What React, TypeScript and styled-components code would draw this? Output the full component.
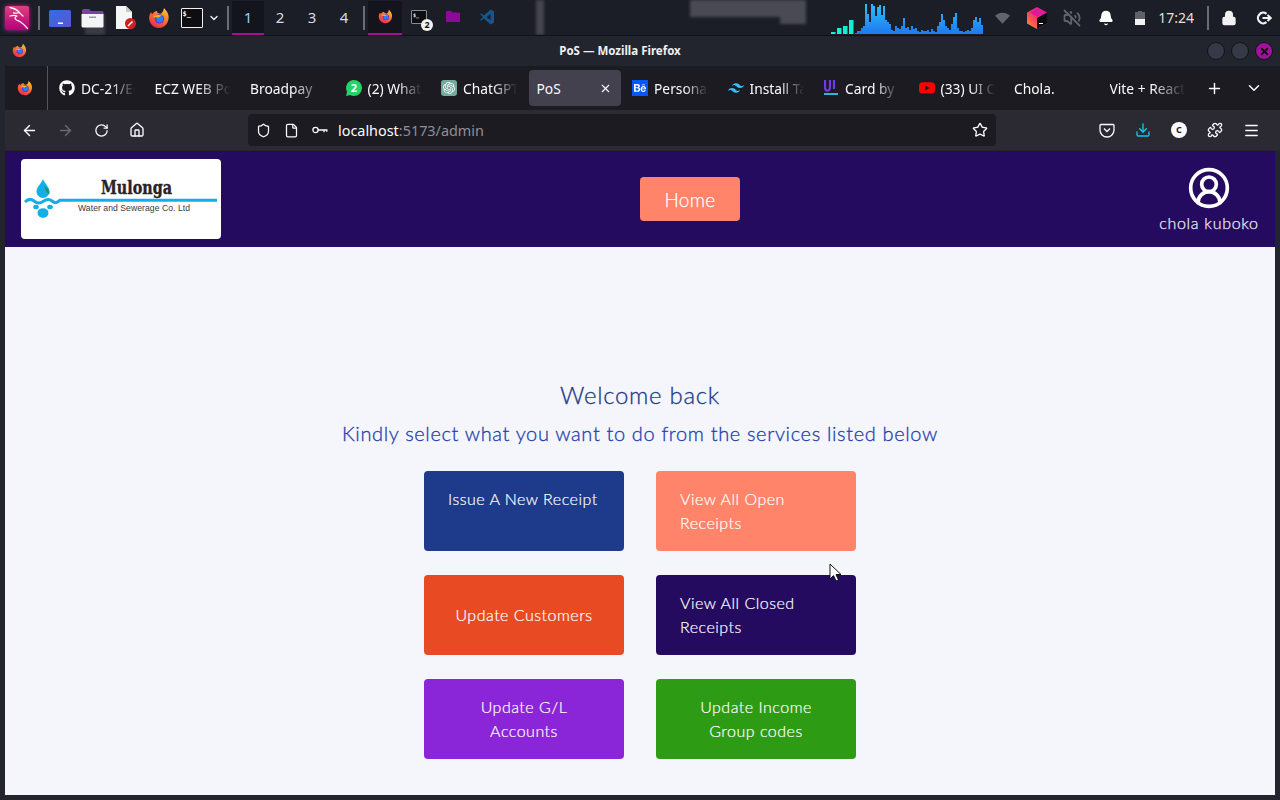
import React from 'react';
import styled, { createGlobalStyle } from 'styled-components';
import {
  ArrowLeft,
  ArrowRight,
  RotateCw,
  House,
  Shield,
  File,
  Star,
  Download,
  Puzzle,
  Menu,
  X,
  Plus,
  ChevronDown,
  Bell,
  Lock,
  VolumeOff,
  CircleUserRound,
} from 'lucide-react';
import { FaGithub } from 'react-icons/fa';
import { SiOpenai, SiBehance, SiTailwindcss, SiYoutube } from 'react-icons/si';

const GlobalStyle = createGlobalStyle`
  html, body {
    margin: 0;
    padding: 0;
    width: 1280px;
    height: 800px;
    overflow: hidden;
    background: #1b1d27;
  }
  * {
    box-sizing: border-box;
  }
`;

const uiFont = `"Noto Sans", "Liberation Sans", sans-serif`;
const pageFont = `Lato, "Open Sans", sans-serif`;

const spectrum = [
  1, 3, 3, 6, 8, 30, 20, 12, 30, 28, 18, 27, 29, 19, 28, 14, 12, 10, 4, 3, 8, 6, 5, 8, 16, 6, 7, 4, 8, 5, 6, 3, 2,
  4, 3, 3, 4, 2, 5, 3, 2, 8, 12, 20, 14, 8, 6, 4, 10, 17, 21, 6, 3, 3, 2, 3, 4, 3, 6, 14, 17, 12, 16, 9,
];

const FirefoxIcon = ({ size = 20 }: { size?: number }) => (
  <svg width={size} height={size} viewBox="0 0 20 20">
    <defs>
      <linearGradient id="ffOuter" x1="0.8" y1="0" x2="0.2" y2="1">
        <stop offset="0" stopColor="#ffc933" />
        <stop offset="0.5" stopColor="#ff6a2b" />
        <stop offset="1" stopColor="#e6245c" />
      </linearGradient>
    </defs>
    <path
      d="M14.5 1c.9 1.3 3.8 3.4 4.2 7.3C19.3 14 15.200 19 10 19 4.800 19 1 15 1 10c0-2.200.8-4.200 2-5.500 0 1 .3 1.700.8 2.200C4.800 5 6.500 3.800 8.300 3.700 7.800 5 9 5.600 10.500 6c1.800.5 3.500-1.500 4-5z"
      fill="url(#ffOuter)"
    />
    <circle cx="10.400" cy="10.800" r="4.300" fill="#5a3fd6" />
    <circle cx="10.600" cy="11" r="3" fill="#2f7df0" />
    <path d="M4.500 9c2-1.800 5.500-2.500 9-.8-1.800-.3-3 .3-4 1.300-1.500-.3-3.200-.5-5-.5z" fill="#ffb02e" />
  </svg>
);

const KaliIcon = () => (
  <svg width="24" height="24" viewBox="0 0 24 24">
    <defs>
      <linearGradient id="kaliBg" x1="0" y1="0" x2="0" y2="1">
        <stop offset="0" stopColor="#e0407f" />
        <stop offset="1" stopColor="#b3007a" />
      </linearGradient>
    </defs>
    <rect width="24" height="24" rx="2" fill="url(#kaliBg)" />
    <path
      d="M5 1.500c3.500.8 6.500 1.800 8.500 4 1.400 1.500 2.500 3 4.500 4.500M5 10c2.500-.8 5.500-.8 7 0-1.500.6-2.300 1.800-1.800 2.800.8 1.600 3.300 2 5.300 3.200 2.500 1.500 4.500 3.500 7 6.500M14 6.500c-1.500.6-3.500.8-5.500.3"
      fill="none"
      stroke="#fff"
      strokeWidth="1.300"
      strokeLinecap="round"
      strokeLinejoin="round"
    />
  </svg>
);

const FolderBlue = () => (
  <svg width="22" height="18" viewBox="0 0 22 18">
    <defs>
      <linearGradient id="folderBlue" x1="0" y1="0" x2="1" y2="1">
        <stop offset="0" stopColor="#2f6fe0" />
        <stop offset="1" stopColor="#5a55d8" />
      </linearGradient>
    </defs>
    <rect width="22" height="17" y="1" rx="1.500" fill="url(#folderBlue)" />
    <rect x="9" y="13.500" width="5" height="1.500" fill="#fff" />
  </svg>
);

const FilesIcon = () => (
  <svg width="23" height="20" viewBox="0 0 23 20">
    <path d="M1 3c0-1 .6-2 1.500-2H8l2 2h11c1 0 1.500.6 1.500 2v2H1z" fill="#7a3fa8" />
    <path d="M.5 6h22v12c0 1-.6 1.500-1.500 1.500H2c-1 0-1.500-.6-1.500-1.500z" fill="#f4f4f6" />
    <rect x="8" y="8.500" width="7" height="1.500" fill="#9a9aa5" />
  </svg>
);

const NoteIcon = () => (
  <svg width="22" height="24" viewBox="0 0 22 24">
    <path d="M1 0h10l6 6v17H1z" fill="#f6f6f6" />
    <path d="M11 0l6 6h-6z" fill="#c9c9c9" />
    <circle cx="15.500" cy="17.500" r="5.500" fill="#cf1f1f" />
    <path d="M13 20l4.500-4.500" stroke="#fff" strokeWidth="1.600" />
  </svg>
);

const TerminalIcon = ({ faded }: { faded?: boolean }) => (
  <TerminalBox $faded={faded}>$_</TerminalBox>
);

const PurpleFolder = () => (
  <svg width="14" height="11" viewBox="0 0 14 11">
    <path d="M0 1c0-.6.4-1 1-1h4l1.500 1.500H13c.6 0 1 .4 1 1V10c0 .6-.4 1-1 1H1c-.6 0-1-.4-1-1z" fill="#8b0a9c" />
  </svg>
);

const VsCodeIcon = () => (
  <svg width="16" height="16" viewBox="0 0 16 16">
    <path d="M11.500 0.500L15 2.200v11.600l-3.500 1.700L5 9.500l-3 2.300-1-.8L4 8 1 5l1-.8 3 2.300zM11.500 4.800L7.700 8l3.800 3.200z" fill="#14568a" />
  </svg>
);

const WifiIcon = () => (
  <svg width="15" height="12" viewBox="0 0 16 12">
    <path d="M0 3.500C4.500-.8 11.500-.8 16 3.500L8 12z" fill="#62646c" />
  </svg>
);

const JetBrainsIcon = () => (
  <svg width="20" height="22" viewBox="0 0 20 22">
    <defs>
      <linearGradient id="jbBg" x1="0" y1="1" x2="1" y2="0">
        <stop offset="0" stopColor="#ff9a1f" />
        <stop offset="0.5" stopColor="#f5316f" />
        <stop offset="1" stopColor="#d414b8" />
      </linearGradient>
    </defs>
    <path d="M10 0l10 5.500v11L10 22 0 16.500v-11z" fill="url(#jbBg)" />
    <path d="M10 11l10-5.500v11L10 22z" fill="#0c0c10" />
    <path d="M3 5.500L10 2l7 3.500L10 9.500z" fill="#e0189a" />
    <rect x="12" y="16" width="4" height="1" fill="#fff" />
  </svg>
);

const BatteryIcon = () => (
  <svg width="10" height="14" viewBox="0 0 10 14">
    <path d="M3 0h4v1h3v13H0V1h3z" fill="#5e6068" />
    <rect y="8" width="10" height="6" fill="#f2f2f2" />
  </svg>
);

const LogoutIcon = () => (
  <svg width="16" height="14" viewBox="0 0 16 14">
    <path d="M10.500 2.800A5.300 5.300 0 1 0 10.500 11.200" fill="none" stroke="#f2f2f2" strokeWidth="2.200" />
    <path d="M6.500 7h7.500M11.500 4l3.200 3-3.200 3" fill="none" stroke="#f2f2f2" strokeWidth="2" />
  </svg>
);

const Spectrum = () => (
  <svg width="153" height="30" viewBox="0 0 153 30">
    <defs>
      <linearGradient id="specFill" gradientUnits="userSpaceOnUse" x1="0" y1="30" x2="0" y2="0">
        <stop offset="0" stopColor="#1f78ee" />
        <stop offset="1" stopColor="#2bc0ff" />
      </linearGradient>
    </defs>
    {[2, 6, 8, 14].map((h, i) => (
      <rect key={i} x={i * 6} y={30 - h} width="4.500" height={h} fill="#14f0cf" />
    ))}
    {spectrum.map((h, i) => (
      <rect key={i} x={24 + i * 2} y={30 - h} width="2" height={h} fill="url(#specFill)" />
    ))}
  </svg>
);

const WhatsappIcon = () => (
  <svg width="16" height="16" viewBox="0 0 16 16">
    <path d="M8 0a8 8 0 0 1 0 16c-1.400 0-2.700-.4-3.800-1L0 16l1.100-4A8 8 0 0 1 8 0z" fill="#25d366" />
    <text x="8" y="11.800" textAnchor="middle" fontFamily='"Noto Sans", sans-serif' fontWeight="700" fontSize="11" fill="#fff">
      2
    </text>
  </svg>
);

const KeyIcon = () => (
  <svg width="16" height="16" viewBox="0 0 16 16">
    <circle cx="3.500" cy="8" r="2.600" fill="none" stroke="#fbfbfe" strokeWidth="1.300" />
    <path d="M6 8h9.500M12 8v2.200M14.800 8v1.800" fill="none" stroke="#fbfbfe" strokeWidth="1.300" />
  </svg>
);

const UiBadge = () => (
  <svg width="14" height="16" viewBox="0 0 14 16">
    <path d="M1 0v7c0 5 5 5 5 0V0M10 0v9" fill="none" stroke="#6d3be8" strokeWidth="2.200" />
    <rect x="0" y="13" width="14" height="2" fill="#2fb5d8" />
  </svg>
);

const MulongaLogo = () => (
  <svg width="200" height="80" viewBox="0 0 200 80">
    <path d="M22 20c-2 5-6.500 8-6.500 12.500a6.500 6.500 0 0 0 13 0C28.500 28 24 25 22 20z" fill="#11aee8" />
    <path d="M23.500 27c2.500 2 5 4 5 8-2.800-1-4.500-4-5-8z" fill="#1d9a58" />
    <path
      d="M4 43c3.500-3.500 6-3.500 9-1s5.500 3 9 .5 6-3 9-.5 4.500 2.500 8-.8H196"
      fill="none"
      stroke="#12aeea"
      strokeWidth="3"
    />
    <ellipse cx="15" cy="48" rx="2.800" ry="2.200" fill="#12aeea" />
    <ellipse cx="29" cy="48" rx="2.800" ry="2.200" fill="#12aeea" />
    <ellipse cx="22" cy="54" rx="5.500" ry="4.800" fill="#12aeea" />
    <text
      x="80"
      y="35"
      fontFamily='"DejaVu Serif", serif'
      fontWeight="700"
      fontSize="18"
      textLength="71"
      lengthAdjust="spacingAndGlyphs"
      fill="#2a2226"
      stroke="#2a2226"
      strokeWidth="0.4"
    >
      Mulonga
    </text>
    <text x="57" y="52" fontFamily='"Liberation Sans", sans-serif' fontSize="8.600" textLength="112" fill="#3a3a3a">
      Water and Sewerage Co. Ltd
    </text>
  </svg>
);

const actions: { label: string; bg: string; align?: 'left'; center?: boolean }[] = [
  { label: 'Issue A New Receipt', bg: '#1e3a8a', align: 'left' },
  { label: 'View All Open Receipts', bg: '#ff8469', align: 'left' },
  { label: 'Update Customers', bg: '#e84a23', center: true },
  { label: 'View All Closed Receipts', bg: '#240b60', align: 'left' },
  { label: 'Update G/L Accounts', bg: '#8a26d8' },
  { label: 'Update Income Group codes', bg: '#2d9b14' },
];

export default function App() {
  const tabs: { label: string; icon?: React.ReactNode; active?: boolean }[] = [
    { label: 'DC-21/ECZ', icon: <FaGithub size={16} color="#fbfbfe" /> },
    { label: 'ECZ WEB Portal' },
    { label: 'Broadpay' },
    { label: '(2) WhatsApp', icon: <WhatsappIcon /> },
    {
      label: 'ChatGPT',
      icon: (
        <OpenAiBadge>
          <SiOpenai size={12} color="#fff" />
        </OpenAiBadge>
      ),
    },
    { label: 'PoS', active: true },
    {
      label: 'Personal',
      icon: (
        <BehanceBadge>
          <SiBehance size={12} color="#fff" />
        </BehanceBadge>
      ),
    },
    { label: 'Install Tailwind', icon: <SiTailwindcss size={16} color="#38bdf8" /> },
    { label: 'Card by', icon: <UiBadge /> },
    { label: '(33) UI Components', icon: <SiYoutube size={16} color="#ff0000" /> },
    { label: 'Chola.' },
    { label: 'Vite + React' },
  ];

  return (
    <>
      <GlobalStyle />
      <Desktop>
        <Panel>
          <PanelGroup>
            <KaliSlot>
              <KaliIcon />
            </KaliSlot>
            <PanelDivider />
            <Launcher>
              <FolderBlue />
            </Launcher>
            <Launcher>
              <FilesIcon />
            </Launcher>
            <Launcher>
              <NoteIcon />
            </Launcher>
            <Launcher>
              <FirefoxIcon size={22} />
            </Launcher>
            <Launcher>
              <TerminalIcon />
            </Launcher>
            <LauncherMenu>
              <ChevronDown size={12} color="#e6e6e6" strokeWidth={3} />
            </LauncherMenu>
            <PanelDivider />
            {[1, 2, 3, 4].map((n) => (
              <Workspace key={n} $active={n === 1}>
                {n}
              </Workspace>
            ))}
            <PanelDivider />
            <TaskSlot $active>
              <FirefoxIcon size={15} />
            </TaskSlot>
            <TaskSlot>
              <TerminalIcon faded />
              <CountBadge>2</CountBadge>
            </TaskSlot>
            <TaskSlot>
              <PurpleFolder />
            </TaskSlot>
            <TaskSlot>
              <VsCodeIcon />
            </TaskSlot>
          </PanelGroup>
          <PanelTray>
            <SpectrumSlot>
              <Spectrum />
            </SpectrumSlot>
            <TrayItem $gap={11}>
              <WifiIcon />
            </TrayItem>
            <TrayItem $gap={17}>
              <JetBrainsIcon />
            </TrayItem>
            <TrayItem $gap={16}>
              <VolumeOff size={18} color="#62646c" strokeWidth={2.4} />
            </TrayItem>
            <TrayItem $gap={17}>
              <Bell size={16} color="#fff" fill="#fff" />
            </TrayItem>
            <TrayItem $gap={21}>
              <BatteryIcon />
            </TrayItem>
            <Clock>17:24</Clock>
            <TrayDivider />
            <TrayItem $gap={12}>
              <Lock size={16} color="#f2f2f2" fill="#f2f2f2" />
            </TrayItem>
            <TrayItem $gap={19}>
              <LogoutIcon />
            </TrayItem>
          </PanelTray>
        </Panel>
        <TitleBar>
          <TitleIcon>
            <FirefoxIcon size={15} />
          </TitleIcon>
          <TitleText>PoS — Mozilla Firefox</TitleText>
          <WindowButtons>
            <WindowDot />
            <WindowDot />
            <WindowDot $close>
              <X size={11} color="#111" strokeWidth={4} />
            </WindowDot>
          </WindowButtons>
        </TitleBar>
        <Browser>
          <TabStrip>
            <FirefoxViewSlot>
              <FirefoxIcon size={16} />
            </FirefoxViewSlot>
            {tabs.map((tab) => (
              <Tab key={tab.label} $active={tab.active}>
                {tab.icon && <TabIcon>{tab.icon}</TabIcon>}
                <TabLabel $active={tab.active}>{tab.label}</TabLabel>
                {tab.active && (
                  <TabClose>
                    <X size={13} color="#fbfbfe" />
                  </TabClose>
                )}
              </Tab>
            ))}
            <NewTabButton>
              <Plus size={17} color="#fbfbfe" />
            </NewTabButton>
            <StripButton>
              <ChevronDown size={18} color="#fbfbfe" />
            </StripButton>
          </TabStrip>
          <NavBar>
            <NavGroup>
              <NavIcon>
                <ArrowLeft size={17} color="#fbfbfe" />
              </NavIcon>
              <NavIcon>
                <ArrowRight size={17} color="#6a6a72" />
              </NavIcon>
              <NavIcon>
                <RotateCw size={15} color="#fbfbfe" />
              </NavIcon>
              <NavIcon>
                <House size={16} color="#fbfbfe" />
              </NavIcon>
            </NavGroup>
            <UrlBar>
              <UrlIcons>
                <Shield size={15} color="#fbfbfe" />
                <File size={15} color="#fbfbfe" />
                <KeyIcon />
              </UrlIcons>
              <UrlText>
                localhost<UrlMuted>:5173/admin</UrlMuted>
              </UrlText>
              <Star size={16} color="#fbfbfe" />
            </UrlBar>
            <NavTools>
              <PocketIcon viewBox="0 0 16 16" width="16" height="16">
                <path d="M2 2.500h12c.6 0 1 .4 1 1V8a7 7 0 0 1-14 0V3.500c0-.6.4-1 1-1z" fill="none" stroke="#fbfbfe" strokeWidth="1.300" />
                <path d="M5 6.500l3 3 3-3" fill="none" stroke="#fbfbfe" strokeWidth="1.300" />
              </PocketIcon>
              <Download size={16} color="#12c8f5" />
              <ProfileChip>C</ProfileChip>
              <Puzzle size={16} color="#fbfbfe" />
              <Menu size={17} color="#fbfbfe" />
            </NavTools>
          </NavBar>
          <Page>
            <Header>
              <LogoCard>
                <MulongaLogo />
              </LogoCard>
              <HomeButton>Home</HomeButton>
              <UserBlock>
                <CircleUserRound size={44} color="#fff" strokeWidth={2} />
                <UserName>chola kuboko</UserName>
              </UserBlock>
            </Header>
            <Content>
              <Welcome>Welcome back</Welcome>
              <Lead>Kindly select what you want to do from the services listed below</Lead>
              <ActionGrid>
                {actions.map((a) => (
                  <ActionButton key={a.label} $bg={a.bg} $align={a.align} $center={a.center}>
                    {a.label}
                  </ActionButton>
                ))}
              </ActionGrid>
            </Content>
            <Cursor viewBox="0 0 14 20" width="14" height="20">
              <path d="M1 1v15l3.500-3.500 2.500 5.500 2.500-1-2.500-5.500h5z" fill="#fff" stroke="#111" strokeWidth="1" />
            </Cursor>
          </Page>
        </Browser>
      </Desktop>
    </>
  );
}

const Desktop = styled.div`
  width: 1280px;
  height: 800px;
  display: flex;
  flex-direction: column;
  background: #1b1d27;
  overflow: hidden;
`;

const Panel = styled.div`
  position: relative;
  height: 36px;
  display: flex;
  align-items: stretch;
  justify-content: space-between;
  background: #1b1d27;
  border-bottom: 1px solid #101118;
  overflow: hidden;

  /* the wallpaper showing through the panel */
  &::before {
    content: '';
    position: absolute;
    inset: 0;
    filter: blur(1.5px);
    background-repeat: no-repeat;
    background-image: linear-gradient(#45454f, #45454f), linear-gradient(#4a4a55, #4a4a55),
      linear-gradient(#3a3a44, #3a3a44), linear-gradient(#4a4a55, #4a4a55);
    background-size: 8px 36px, 112px 17px, 20px 22px, 26px 24px;
    background-position: 536px 0, 690px 0, 85px 14px, 780px 0;
  }
`;

const PanelGroup = styled.div`
  position: relative;
  display: flex;
  align-items: center;
`;

const KaliSlot = styled.div`
  width: 35px;
  display: flex;
  justify-content: center;
  padding-right: 1px;

  svg {
    filter: drop-shadow(0 0 2px #c0208a);
  }
`;

const PanelDivider = styled.div`
  width: 2px;
  height: 24px;
  margin: 0 3px;
  background: #6b6d74;
`;

const Launcher = styled.div`
  width: 33px;
  display: flex;
  justify-content: center;
  align-items: center;
`;

const LauncherMenu = styled.div`
  display: flex;
  margin-right: 4px;
`;

const TerminalBox = styled.div<{ $faded?: boolean }>`
  width: ${(p) => (p.$faded ? '16px' : '22px')};
  height: ${(p) => (p.$faded ? '14px' : '20px')};
  border: 1px solid ${(p) => (p.$faded ? '#8a8c92' : '#f2f2f2')};
  border-radius: 1px;
  background: #0e0e12;
  color: #f2f2f2;
  font: 700 ${(p) => (p.$faded ? '5px' : '7px')} / 1 "DejaVu Sans Mono", monospace;
  padding: 2px 0 0 1px;
`;

const Workspace = styled.div<{ $active?: boolean }>`
  width: 32px;
  height: 34px;
  display: flex;
  align-items: center;
  justify-content: center;
  font: 400 15px ${uiFont};
  color: ${(p) => (p.$active ? '#8fd2f5' : '#d5dce6')};
  background: ${(p) => (p.$active ? '#14151c' : 'transparent')};
  border-bottom: 2px solid ${(p) => (p.$active ? '#a0119c' : 'transparent')};
`;

const TaskSlot = styled.div<{ $active?: boolean }>`
  position: relative;
  width: 34px;
  height: 34px;
  display: flex;
  align-items: center;
  justify-content: center;
  background: ${(p) => (p.$active ? '#14151c' : 'transparent')};
  border-bottom: 2px solid ${(p) => (p.$active ? '#a0119c' : 'transparent')};
`;

const CountBadge = styled.span`
  position: absolute;
  right: 3px;
  bottom: 2px;
  width: 12px;
  height: 12px;
  border-radius: 50%;
  background: #f2f2f2;
  color: #111;
  font: 700 9px/12px ${uiFont};
  text-align: center;
`;

const PanelTray = styled.div`
  position: relative;
  display: flex;
  align-items: center;
  padding-right: 8px;
`;

const SpectrumSlot = styled.div`
  display: flex;
  align-self: flex-start;
  padding-top: 4px;
`;

const TrayItem = styled.div<{ $gap: number }>`
  display: flex;
  margin-left: ${(p) => p.$gap}px;
`;

const Clock = styled.span`
  margin-left: 13px;
  font: 400 14px ${uiFont};
  color: #e9dfd3;
`;

const TrayDivider = styled.div`
  width: 2px;
  height: 24px;
  margin-left: 13px;
  background: #6b6d74;
`;

const TitleBar = styled.div`
  position: relative;
  height: 30px;
  padding-right: 40px;
  display: flex;
  align-items: center;
  justify-content: center;
  background: #22252e;
`;

const TitleIcon = styled.div`
  position: absolute;
  left: 12px;
  top: 7px;
  display: flex;
`;

const TitleText = styled.span`
  margin-top: -1px;
  font: 700 11.5px ${uiFont};
  color: #f0f0f2;
`;

const WindowButtons = styled.div`
  position: absolute;
  right: 7px;
  top: 6px;
  display: flex;
  gap: 6px;
`;

const WindowDot = styled.div<{ $close?: boolean }>`
  width: 18px;
  height: 18px;
  border-radius: 50%;
  display: flex;
  align-items: center;
  justify-content: center;
  background: ${(p) => (p.$close ? '#a0119c' : '#363a48')};
  border: 1px solid #111218;
`;

const Browser = styled.div`
  flex: 1;
  min-height: 0;
  display: flex;
  flex-direction: column;
  padding: 0 5px 5px;
  background: #22252e;
`;

const TabStrip = styled.div`
  height: 44px;
  margin-right: -5px;
  display: flex;
  align-items: center;
  background: #1c1b22;
`;

const FirefoxViewSlot = styled.div`
  flex: 0 0 43px;
  height: 44px;
  margin-right: 3px;
  padding-right: 3px;
  display: flex;
  align-items: center;
  justify-content: center;
  border-right: 1px solid #55555c;
`;

const Tab = styled.div<{ $active?: boolean }>`
  flex: 0 0 92px;
  min-width: 0;
  margin-right: 3.5px;
  height: 36px;
  padding: 0 8px;
  display: flex;
  align-items: center;
  gap: 6px;
  border-radius: 4px;
  background: ${(p) => (p.$active ? '#42414d' : 'transparent')};
`;

const TabIcon = styled.span`
  display: flex;
  flex: 0 0 16px;
  justify-content: center;
`;

const OpenAiBadge = styled.span`
  width: 16px;
  height: 16px;
  border-radius: 3px;
  background: #74aa9c;
  display: flex;
  align-items: center;
  justify-content: center;
`;

const BehanceBadge = styled.span`
  width: 16px;
  height: 16px;
  background: #0057ff;
  display: flex;
  align-items: center;
  justify-content: center;
`;

const TabLabel = styled.span<{ $active?: boolean }>`
  flex: 1;
  min-width: 0;
  overflow: hidden;
  white-space: nowrap;
  font: 400 13.8px ${uiFont};
  color: #fbfbfe;
  mask-image: ${(p) => (p.$active ? 'none' : 'linear-gradient(to right, #000 55%, transparent 100%)')};
`;

const TabClose = styled.span`
  display: flex;
  margin-right: 1px;
`;

const StripButton = styled.div`
  flex: 0 0 40px;
  height: 36px;
  display: flex;
  align-items: center;
  justify-content: center;
`;

const NewTabButton = styled(StripButton)`
  margin-left: -3px;
`;

const NavBar = styled.div`
  height: 40px;
  margin-right: -5px;
  display: flex;
  align-items: center;
  background: #2b2a33;
`;

const NavGroup = styled.div`
  width: 243px;
  padding-left: 6px;
  display: flex;
  align-items: center;
`;

const NavIcon = styled.div`
  width: 36px;
  display: flex;
  justify-content: center;
`;

const UrlBar = styled.div`
  width: 748px;
  height: 32px;
  padding: 0 8px;
  display: flex;
  align-items: center;
  background: #1c1b22;
  border-radius: 4px;
`;

const UrlIcons = styled.div`
  display: flex;
  align-items: center;
  gap: 13px;
  margin-right: 10px;
`;

const UrlText = styled.span`
  flex: 1;
  font: 400 14.4px ${uiFont};
  color: #fbfbfe;
`;

const UrlMuted = styled.span`
  color: #8f8f96;
`;

const NavTools = styled.div`
  flex: 1;
  padding: 0 20px 0 103px;
  display: flex;
  align-items: center;
  justify-content: space-between;
`;

const PocketIcon = styled.svg`
  display: block;
`;

const ProfileChip = styled.span`
  width: 16px;
  height: 16px;
  border-radius: 50%;
  background: #fbfbfe;
  color: #1c1b22;
  font: 700 9px/16px ${uiFont};
  text-align: center;
`;

const Page = styled.div`
  position: relative;
  flex: 1;
  min-height: 0;
  margin-top: 1px;
  display: flex;
  flex-direction: column;
  background: #f4f6fb;
`;

const Header = styled.header`
  height: 96px;
  padding: 0 16px;
  display: flex;
  align-items: center;
  justify-content: space-between;
  background: #240b60;
`;

const LogoCard = styled.div`
  width: 200px;
  height: 80px;
  border-radius: 4px;
  background: #fff;
  display: flex;
`;

const HomeButton = styled.button`
  width: 100px;
  height: 44px;
  border: none;
  border-radius: 4px;
  background: #ff8469;
  color: #fff;
  font: 300 19px ${pageFont};
  letter-spacing: 0.3px;
  -webkit-text-stroke: 0.25px currentColor;
`;

const UserBlock = styled.div`
  width: 100px;
  padding-top: 2px;
  display: flex;
  flex-direction: column;
  align-items: center;
`;

const UserName = styled.span`
  margin-top: 1px;
  color: #efecf6;
  font: 300 16px/24px ${pageFont};
  letter-spacing: 0.7px;
  white-space: nowrap;
  -webkit-text-stroke: 0.25px currentColor;
`;

const Content = styled.main`
  flex: 1;
  padding-top: 132px;
  display: flex;
  flex-direction: column;
  align-items: center;
`;

const Welcome = styled.h1`
  margin: 0;
  font: 300 24px/32px ${pageFont};
  letter-spacing: 0.7px;
  color: #1e3a8a;
  -webkit-text-stroke: 0.3px currentColor;
`;

const Lead = styled.p`
  margin: 6px 0 0;
  font: 300 20px/32px ${pageFont};
  letter-spacing: 0.65px;
  color: #1e40af;
  -webkit-text-stroke: 0.3px currentColor;
`;

const ActionGrid = styled.div`
  margin-top: 22px;
  display: grid;
  grid-template-columns: 200px 200px;
  grid-auto-rows: 80px;
  gap: 24px 32px;
`;

const ActionButton = styled.button<{ $bg: string; $align?: 'left'; $center?: boolean }>`
  padding: 16px 24px;
  display: flex;
  align-items: ${(p) => (p.$center ? 'center' : 'flex-start')};
  justify-content: ${(p) => (p.$align === 'left' ? 'flex-start' : 'center')};
  border: none;
  border-radius: 4px;
  background: ${(p) => p.$bg};
  color: #fff;
  font: 300 16px/24px ${pageFont};
  letter-spacing: 0.5px;
  -webkit-text-stroke: 0.2px currentColor;
  text-align: ${(p) => p.$align ?? 'center'};
`;

const Cursor = styled.svg`
  position: absolute;
  left: 824px;
  top: 412px;
`;
